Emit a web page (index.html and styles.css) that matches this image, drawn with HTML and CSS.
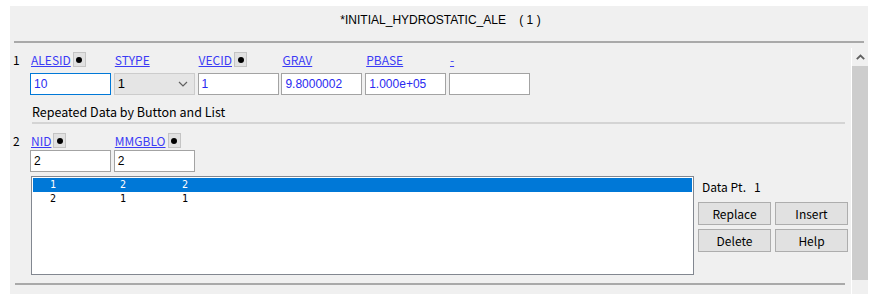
FILE: index.html
```html
<!DOCTYPE html>
<html lang="en">
<head>
    <meta charset="UTF-8">
    <title>*INITIAL_HYDROSTATIC_ALE</title>
    <link rel="stylesheet" href="styles.css">
</head>
<body>
    <div class="panel">
        <!-- Keyword title -->
        <div class="title">*INITIAL_HYDROSTATIC_ALE&nbsp;&nbsp;&nbsp;&nbsp;( 1 )</div>

        <div class="main">
            <div class="content">
                <!-- Card 1 -->
                <div class="card">
                    <div class="card-num">1</div>
                    <div class="fields">
                        <div class="label"><a href="#">ALESID</a><span class="dot-btn"><i></i></span></div>
                        <div class="label"><a href="#">STYPE</a></div>
                        <div class="label"><a href="#">VECID</a><span class="dot-btn"><i></i></span></div>
                        <div class="label"><a href="#">GRAV</a></div>
                        <div class="label"><a href="#">PBASE</a></div>
                        <div class="label"><a href="#">-</a></div>

                        <div class="input focused blue">10</div>
                        <div class="select">1<svg width="10" height="6" viewBox="0 0 10 6"><path d="M1 1 L5 5 L9 1" fill="none" stroke="#606060" stroke-width="1.2"/></svg></div>
                        <div class="input blue">1</div>
                        <div class="input blue">9.8000002</div>
                        <div class="input blue">1.000e+05</div>
                        <div class="input"></div>
                    </div>
                </div>

                <div class="section-title">Repeated Data by Button and List</div>

                <!-- Card 2 -->
                <div class="card card-repeat">
                    <div class="card-num">2</div>
                    <div class="fields">
                        <div class="label"><a href="#">NID</a><span class="dot-btn"><i></i></span></div>
                        <div class="label"><a href="#">MMGBLO</a><span class="dot-btn"><i></i></span></div>
                        <div></div><div></div><div></div><div></div>

                        <div class="input">2</div>
                        <div class="input">2</div>
                    </div>
                </div>

                <div class="list-area">
                    <div class="listbox">
                        <div class="list-row selected"><span>1</span><span>2</span><span>2</span></div>
                        <div class="list-row"><span>2</span><span>1</span><span>1</span></div>
                    </div>
                    <div class="list-side">
                        <div class="data-pt">Data Pt.&nbsp;&nbsp;&nbsp;1</div>
                        <div class="btn-grid">
                            <button>Replace</button>
                            <button>Insert</button>
                            <button>Delete</button>
                            <button>Help</button>
                        </div>
                    </div>
                </div>

                <div class="bottom-line"></div>
            </div>

            <div class="scrollbar">
                <div class="scroll-arrow">
                    <svg width="9" height="6" viewBox="0 0 9 6"><path d="M0.8 5.2 L4.5 1.5 L8.2 5.2" fill="none" stroke="#606060" stroke-width="1.8"/></svg>
                </div>
                <div class="scroll-thumb"></div>
            </div>
        </div>
    </div>
</body>
</html>
```

FILE: styles.css
```css
:root {
    --panel-bg: #f0f0f0;
    --link: #3b3bf5;
    --field-border: #a3a3a3;
    --btn-bg: #e1e1e1;
    --btn-border: #adadad;
    --select-blue: #0078d7;
}

* {
    box-sizing: border-box;
    margin: 0;
    padding: 0;
}

body {
    background: #ffffff;
    font-family: 'Noto Sans CJK SC', 'Liberation Sans', sans-serif;
    font-size: 12px;
    color: #000;
}

.panel {
    margin: 6px 5px 0 10px;
    height: 288px;
    background: var(--panel-bg);
    display: flex;
    flex-direction: column;
}

.title {
    height: 37px;
    margin: 0 4px;
    border-bottom: 2px solid #a9a9a9;
    text-align: center;
    font-family: 'Liberation Sans Narrow', 'Liberation Sans', sans-serif;
    font-size: 12px;
    line-height: 29px;
    padding-left: 3px;
}

.main {
    flex: 1;
    display: flex;
    padding-top: 5px;
}

.content {
    flex: 1;
    padding: 4px 0 0 3px;
}

.card {
    display: flex;
}

.card-num {
    width: 17px;
    padding-top: 1px;
    font-size: 12px;
    line-height: 14px;
}

.fields {
    display: grid;
    grid-template-columns: repeat(6, 81px);
    column-gap: 2.8px;
    row-gap: 6px;
}

.card-repeat {
    margin-top: 9px;
}

.card-repeat .fields {
    row-gap: 2px;
}

.label {
    display: flex;
    align-items: center;
    height: 15px;
    padding-left: 1px;
}

.label a {
    color: var(--link);
    font-size: 12px;
    line-height: 14px;
}

.dot-btn {
    width: 13px;
    height: 15px;
    margin-left: 2px;
    background: var(--btn-bg);
    border: 1px solid #c4c4c4;
    display: flex;
    align-items: center;
    justify-content: center;
}

.dot-btn i {
    width: 6px;
    height: 6px;
    border-radius: 50%;
    background: #000;
}

.input,
.select {
    height: 22px;
    border: 1px solid var(--field-border);
    background: #fff;
    padding-left: 3px;
    font-family: 'Liberation Sans', sans-serif;
    font-size: 12px;
    line-height: 20px;
}

.input.blue {
    color: #2a2af0;
}

.input.focused {
    border-color: #0078d7;
}

.select {
    background: #e5e5e5;
    border-color: #cccccc;
    display: flex;
    align-items: center;
    justify-content: space-between;
    padding: 0 6px 0 3px;
    font-size: 13px;
}

.section-title {
    margin: 8px 0 0 19px;
    width: 813px;
    padding-bottom: 2px;
    border-bottom: 2px solid #d4d4d4;
    font-size: 12.5px;
    line-height: 17px;
}

.list-area {
    display: flex;
    margin: 4px 0 0 18px;
}

.listbox {
    width: 663px;
    height: 99px;
    background: #fff;
    border: 1px solid #828790;
    padding: 1px;
}

.list-row {
    display: flex;
    height: 14px;
    font-family: 'DejaVu Sans Mono', monospace;
    font-size: 10px;
    line-height: 14px;
    padding-left: 17px;
}

.list-row span {
    width: 70px;
}

.list-row span:nth-child(2) {
    width: 62px;
}

.list-row.selected {
    background: var(--select-blue);
    color: #fff;
}

.list-side {
    padding: 4px 0 0 4px;
}

.data-pt {
    padding-left: 4px;
    line-height: 14px;
    margin-bottom: 8px;
}

.btn-grid {
    display: grid;
    grid-template-columns: 73px 73px;
    gap: 4px;
}

.btn-grid button {
    height: 23px;
    background: var(--btn-bg);
    border: 1px solid var(--btn-border);
    font-family: 'Noto Sans CJK SC', 'Liberation Sans', sans-serif;
    font-size: 12px;
    color: #000;
}

.bottom-line {
    margin: 8px 6px 0 2px;
    border-top: 2px solid #a9a9a9;
}

.scrollbar {
    width: 17px;
    border-left: 1px solid #fff;
    display: flex;
    flex-direction: column;
    padding-bottom: 14px;
}

.scroll-arrow {
    height: 18px;
    display: flex;
    align-items: center;
    justify-content: center;
}

.scroll-thumb {
    flex: 1;
    background: #cdcdcd;
}
```
